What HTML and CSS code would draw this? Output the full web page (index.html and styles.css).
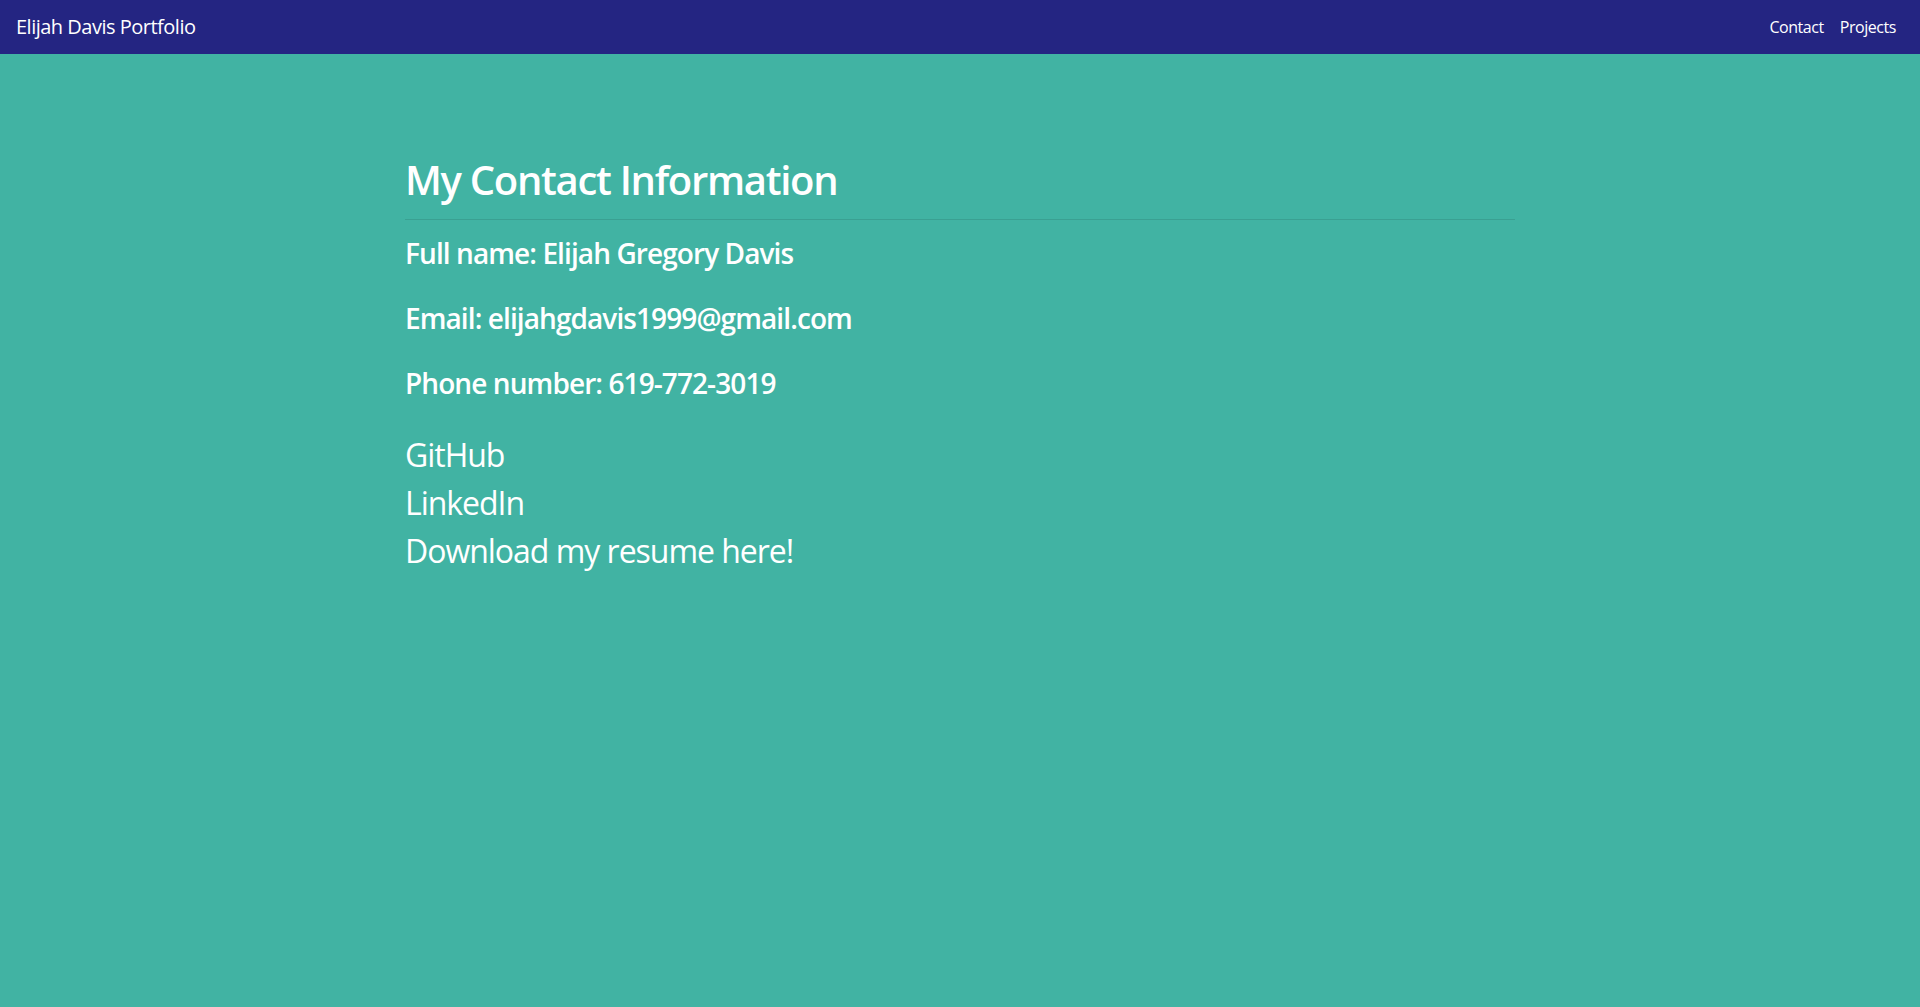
FILE: index.html
```html
<!DOCTYPE html>
<html lang="en">
<head>
<meta charset="utf-8">
<title>Elijah Davis Portfolio</title>
<link rel="stylesheet" href="styles.css">
</head>
<body>
<nav class="navbar">
  <a class="brand" href="#">Elijah Davis Portfolio</a>
  <div class="nav-links">
    <a class="nav-link" href="#">Contact</a>
    <a class="nav-link" href="#">Projects</a>
  </div>
</nav>
<main class="container">
  <h1 class="title">My Contact Information</h1>
  <hr class="rule">
  <h3 class="info">Full name: Elijah Gregory Davis</h3>
  <h3 class="info">Email: elijahgdavis1999@gmail.com</h3>
  <h3 class="info">Phone number: 619-772-3019</h3>
  <div class="links">
    <a class="link" href="#">GitHub</a>
    <a class="link" href="#">LinkedIn</a>
    <a class="link" href="#">Download my resume here!</a>
  </div>
</main>
</body>
</html>
```
FILE: styles.css
```css
html, body {
  margin: 0;
  padding: 0;
}
body {
  background: #41b3a3;
  color: #ffffff;
  font-family: "Open Sans", "Noto Sans", sans-serif;
  letter-spacing: -0.028em;
  min-height: 1007px;
}
a {
  color: #ffffff;
  text-decoration: none;
}
.navbar {
  display: flex;
  align-items: center;
  justify-content: space-between;
  height: 54px;
  padding: 0 16px;
  background: #242582;
  box-sizing: border-box;
}
.brand {
  font-size: 20px;
  line-height: 30px;
  letter-spacing: -0.025em;
}
.nav-links {
  display: flex;
}
.nav-link {
  font-size: 16px;
  line-height: 24px;
  padding: 0 8px;
}
.container {
  width: 1110px;
  margin: 0 auto;
  padding-top: 102px;
}
.title {
  font-size: 40px;
  line-height: 48px;
  font-weight: 600;
  letter-spacing: -0.0325em;
  margin: 0 0 15px;
}
.rule {
  border: 0;
  border-top: 1px solid rgba(0, 0, 0, 0.1);
  margin: 0 0 16px;
}
.info {
  font-size: 28px;
  line-height: 34px;
  font-weight: 600;
  letter-spacing: -0.0325em;
  margin: 0 0 31px;
}
.links {
  display: flex;
  flex-direction: column;
  align-items: flex-start;
}
.link {
  font-size: 32px;
  line-height: 48px;
  font-weight: 400;
  letter-spacing: -0.032em;
}
```
